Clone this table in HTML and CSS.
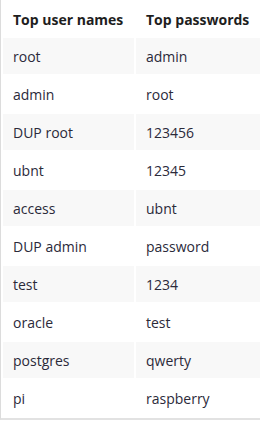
FILE: index.html
```html
<!DOCTYPE html>
<html>
<head>
<meta charset="utf-8">
<link rel="stylesheet" href="styles.css">
</head>
<body>
<div class="wrap">
<table class="creds">
<thead>
<tr><th class="c1">Top user names</th><th>Top passwords</th></tr>
</thead>
<tbody>
<tr><td>root</td><td>admin</td></tr>
<tr><td>admin</td><td>root</td></tr>
<tr><td>DUP root</td><td>123456</td></tr>
<tr><td>ubnt</td><td>12345</td></tr>
<tr><td>access</td><td>ubnt</td></tr>
<tr><td>DUP admin</td><td>password</td></tr>
<tr><td>test</td><td>1234</td></tr>
<tr><td>oracle</td><td>test</td></tr>
<tr><td>postgres</td><td>qwerty</td></tr>
<tr><td>pi</td><td>raspberry</td></tr>
</tbody>
</table>
</div>
</body>
</html>
```
FILE: styles.css
```css
html, body {
  margin: 0;
  padding: 0;
  background: #fff;
  overflow: hidden;
}
.wrap {
  width: 259px;
  overflow: hidden;
  border-left: 1px solid #dcdcdc;
  border-bottom: 2px solid #e2e2e2;
}
.creds {
  border-collapse: separate;
  border-spacing: 2px;
  margin-right: -4px;
  font-family: "Open Sans", sans-serif;
  font-size: 14px;
  color: #2b2a3a;
  width: 263px;
  table-layout: fixed;
}
.creds th {
  text-align: left;
  font-weight: 700;
  color: #1e1e1e;
  height: 34px;
  padding: 0 10px;
}
.creds th.c1 {
  width: 111px;
}
.creds td {
  height: 36px;
  padding: 0 10px;
}
.creds tbody tr:nth-child(odd) td {
  background: #f8f8f8;
}
```
